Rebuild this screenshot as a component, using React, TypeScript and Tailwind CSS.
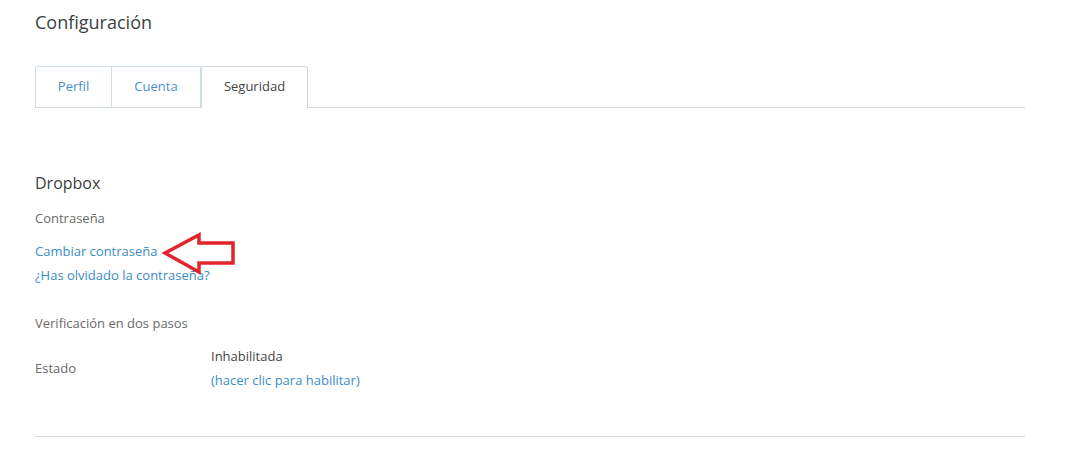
export default function App() {
  const tabs = ["Perfil", "Cuenta", "Seguridad"];
  return (
    <div className="relative min-h-[463px] bg-white pl-[35px] pr-[45px] font-['Open_Sans',sans-serif]">
      <h1 className="pt-[10px] text-[18px] leading-[24px] text-[#3b3f42]">Configuración</h1>

      {/* Pestañas */}
      <div className="mt-[32px] flex border-b border-[#cfd8dc]">
        <div className="flex h-[41px] w-[77px] items-center justify-center rounded-tl-[3px] border border-b-0 border-[#cde0e8] text-[13px] text-[#4a90c4]">
          {tabs[0]}
        </div>
        <div className="flex h-[41px] w-[89px] items-center justify-center border-t border-r border-[#cde0e8] text-[13px] text-[#4a90c4]">
          {tabs[1]}
        </div>
        <div className="-mb-px flex h-[42px] w-[107px] items-center justify-center rounded-t-[3px] border border-b-0 border-[#cfd8dc] bg-white pb-px text-[13px] text-[#444]">
          {tabs[2]}
        </div>
      </div>

      <h2 className="mt-[63px] text-[16px] leading-[24px] text-[#3b3f42]">Dropbox</h2>
      <p className="mt-[13px] text-[13px] leading-[20px] text-[#6a6a6a]">Contraseña</p>
      <div className="mt-[11px] flex flex-col items-start text-[13px] leading-[24px] text-[#3d8cc4]">
        <a>Cambiar contraseña</a>
        <a>¿Has olvidado la contraseña?</a>
      </div>

      <p className="mt-[26px] text-[13px] leading-[20px] text-[#6a6a6a]">Verificación en dos pasos</p>
      <div className="mt-[11px] flex items-center text-[13px] leading-[24px]">
        <div className="w-[176px] text-[#6a6a6a]">Estado</div>
        <div className="flex flex-col">
          <span className="text-[#444]">Inhabilitada</span>
          <a className="text-[#3d8cc4]">(hacer clic para habilitar)</a>
        </div>
      </div>

      <div className="mt-[44px] border-t border-[#d6d6d6]" />

      {/* Flecha roja */}
      <svg className="absolute left-[160px] top-[228px]" width="80" height="50" viewBox="0 0 80 50">
        <polygon
          points="5,25 39,7 39,15 73,15 73,35 39,35 39,44"
          fill="none"
          stroke="#e1252d"
          strokeWidth="3.5"
          strokeLinejoin="miter"
        />
      </svg>
    </div>
  );
}
